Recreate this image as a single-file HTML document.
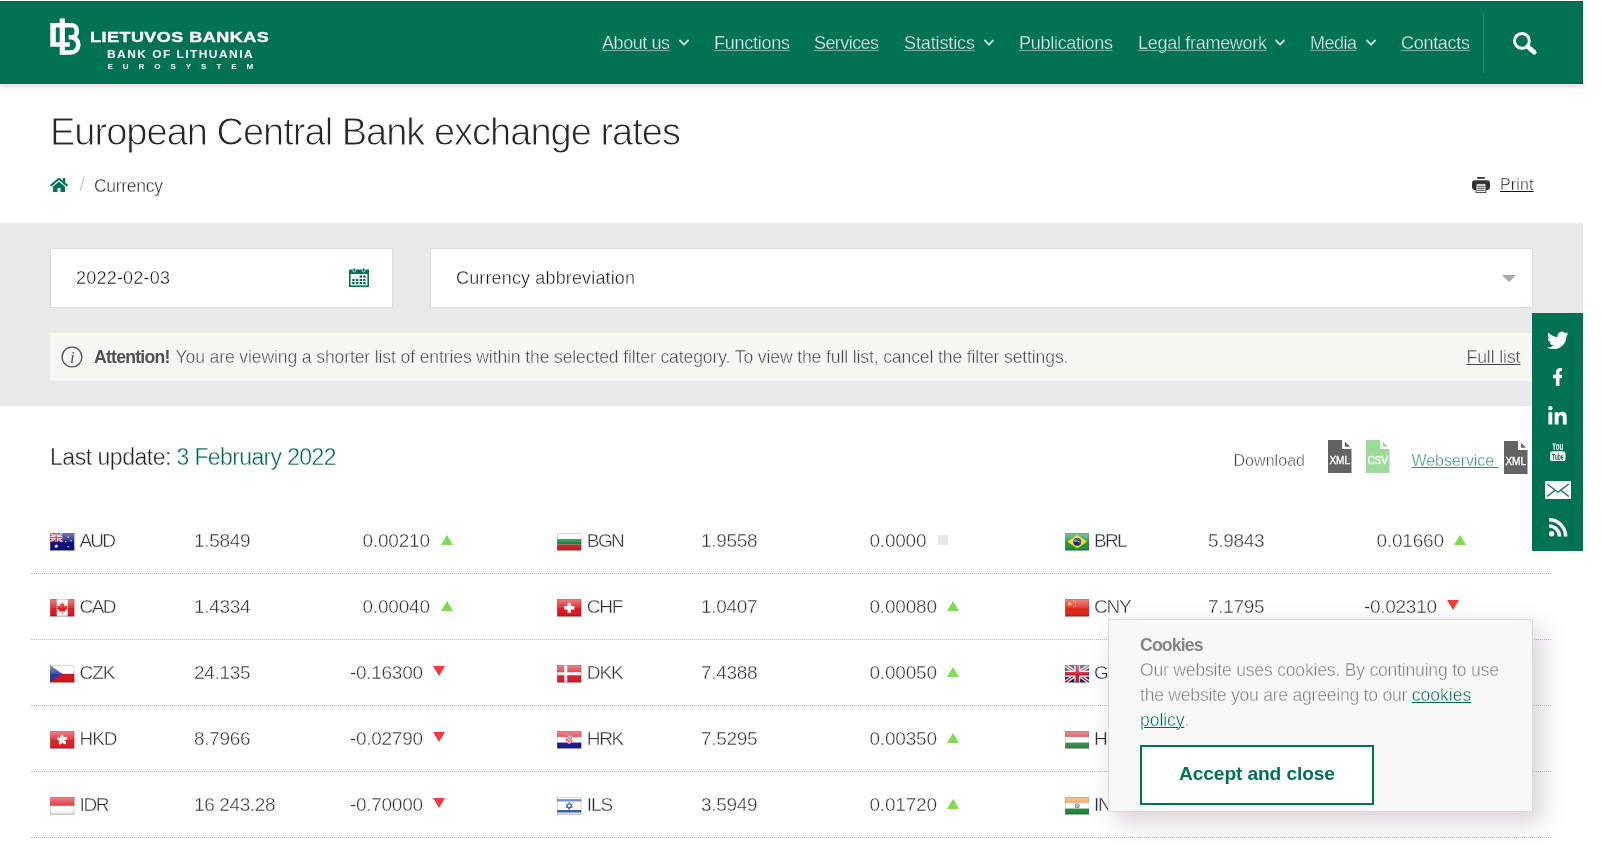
<!DOCTYPE html>
<html lang="en">
<head>
<meta charset="utf-8">
<title>European Central Bank exchange rates | Bank of Lithuania</title>
<style>
*{box-sizing:border-box;margin:0;padding:0}
html,body{width:1603px;height:861px;overflow:hidden;background:#fff}
body{font-family:"Liberation Sans",sans-serif;color:#333;position:relative;font-size:18px}
a{color:inherit}
.abs{position:absolute;white-space:nowrap}
#wrap{will-change:transform;position:absolute;left:0;top:0;width:1603px;height:861px;overflow:hidden;background:#fff}
/* header */
#hdr{position:absolute;left:0;top:1px;width:1583px;height:83px;background:#007254;border-top:1px solid #006648;border-bottom:1px solid #006648;box-shadow:0 1px 0 #f4ebed,1px 0 0 #f4ebed,0 3px 4px rgba(0,0,0,.13)}
#nav a{position:absolute;top:28.5px;height:24px;line-height:24px;font-size:18px;color:#fff;text-decoration:underline;text-decoration-color:rgba(255,255,255,.45);text-decoration-thickness:1px;text-underline-offset:1px;white-space:nowrap}
#nav svg.chev{position:absolute;top:36.500px;width:10px;height:8px}
#nav .div{position:absolute;left:1483px;top:11px;width:1px;height:60px;background:#2a8a70}
/* title */
h1{position:absolute;left:50px;top:108px;height:48px;line-height:48px;font-size:38px;font-weight:normal;color:#262626;white-space:nowrap}
.crumb{font-size:17.600px;color:#262626;top:174.300px;height:24px;line-height:24px}
.crumb.sep{color:#bdbdbd;font-size:21px;-webkit-text-stroke:.5px #fff;top:172.300px}
.home{left:50.300px;top:177px;width:18px;height:16px;line-height:0}
.print{left:1472px;top:176.800px;width:64px;height:18px;color:#161616;line-height:0}
.print .pt{position:absolute;top:-3.200px;height:22px;line-height:22px;font-size:16px;text-decoration:underline;text-decoration-thickness:1px;text-underline-offset:1px}
/* filter band */
#band{position:absolute;left:0;top:223px;width:1583px;height:183px;background:#e9e9e9}
.inp{position:absolute;top:248px;height:59.500px;background:#fff;border:1px solid #dcdcdc}
.inp span{position:absolute;left:25px;top:17px;height:24px;line-height:24px;font-size:18px;color:#141414;white-space:nowrap}
#att{position:absolute;left:50px;top:333px;width:1483px;height:47.500px;background:#f6f6f3;font-size:17.600px;color:#484848}
#att span,#att a,#att b{position:absolute;top:11.800px;height:24px;line-height:24px;white-space:nowrap}
#att a{text-decoration:underline;text-decoration-thickness:1px;text-underline-offset:1px}
#att .info{position:absolute;left:10.800px;top:13px}
/* social */
#soc{position:absolute;left:1532px;top:313px;width:51px;height:238px;background:#007254}
#soc svg{position:absolute}
/* list head */
.lu{left:0;top:443px;width:400px;height:28px;line-height:28px;font-size:23px;color:#262626}
.lu span{position:absolute;top:0}
.lu .g{color:#00694c}
.dl{left:0;top:450.300px;width:1540px;height:22px;line-height:22px;font-size:16px;color:#444}
.dl span,.dl a{position:absolute;top:0}
.dl .file{line-height:0}
.dl .ws{color:#2a8f73;text-decoration:underline;text-decoration-thickness:1px;text-underline-offset:1px;white-space:pre}
/* table */
.row{position:absolute;left:0;width:1583px;height:66px}
.row .ln{position:absolute;left:31px;width:1520px;bottom:0;height:0;border-bottom:1px dotted #bdbdbd}
.row span{position:absolute;top:20.200px;height:26px;line-height:26px;font-size:19px;color:#2e3236;white-space:nowrap}
.row svg.fl{position:absolute;top:25px;width:24.5px;height:18px}
.row i{position:absolute;width:0;height:0;border-left:6px solid transparent;border-right:6px solid transparent}
.row i.up{top:27.300px;border-bottom:10px solid #7fdc4f}
.row i.dn{top:26.800px;border-top:10px solid #f13b3b}
.row i.eq{top:27.600px;width:10px;height:10px;border:0;background:#e8e8e8}
/* cookie */
#ck{position:absolute;left:1108px;top:619px;width:425px;height:193px;background:#f8f8f8;border:1px solid #d9d9d9;box-shadow:8px 10px 24px rgba(70,40,70,.22);color:#7a7a7a;font-size:18px}
#ck>span{position:absolute;left:31px;height:25px;line-height:25px;white-space:pre;font-size:17.600px}
#ck .in{position:relative;display:inline-block;left:0!important;white-space:pre}
#ck a.in{color:#00694c;text-decoration:underline;text-decoration-thickness:1px;text-underline-offset:1px}
#ck .t{position:absolute;top:13.300px;height:24px;line-height:24px;font-size:17.600px;color:#858585;white-space:nowrap}
#ck .btn{position:absolute;left:31px;top:125px;width:234px;height:60px;text-decoration:none;border:2px solid #007254;background:#fff}
#ck .btn b{position:absolute;top:13.800px;height:26px;line-height:26px;font-size:19.200px;color:#007254;white-space:nowrap}

.logo{position:absolute;left:0;top:0;width:280px;height:82px;color:#fff;text-decoration:none}
.logo .mono{position:absolute;left:50px;top:14px}
.logo b{position:absolute;white-space:nowrap;color:#fff;font-weight:bold}
.logo .l1{-webkit-text-stroke:.35px #fff;top:26px;font-size:15.300px;line-height:18px;height:18px}
.logo .l2{top:46.400px;font-size:10.900px;line-height:12px;height:12px}
.logo .l3{top:60.200px;font-size:8px;line-height:10px;height:10px}
#nav svg.srch{position:absolute;left:1511.800px;top:28.800px}

.inp .cal{position:absolute;left:298px;top:18.600px}
.inp .caret{position:absolute;left:1071px;top:26px;width:0;height:0;border-left:7.200px solid transparent;border-right:7.200px solid transparent;border-top:7.500px solid #a9a9a9}
/* thin-out strokes to mimic a light weight */
em.ts{font-style:normal}
.row span,.lu span,.crumb,.dl span,.dl .ws em,.print .pt em{-webkit-text-stroke:.38px #fff}
h1{-webkit-text-stroke:.9px #fff}
#nav a span{-webkit-text-stroke:.4px #007254}
.inp span{-webkit-text-stroke:.38px #fff}
#att span,#att a em{-webkit-text-stroke:.38px #f6f6f3}
#ck span.in,#ck a.in em{-webkit-text-stroke:.4px #f8f8f8}
#att b{color:#525252}

</style>
</head>
<body>
<div id="wrap">
<header id="hdr">
  <a class="logo" href="#" aria-label="Lietuvos bankas">
    <svg class="mono" viewBox="50 16 32 40" width="32" height="40">
      <g fill="#fff">
        <path d="M50.300 23H60v4.400H55.800v14.800H69.800v4.600H50.300z"/>
        <path d="M59.700 18.400h5.200v36.300h-5.200z"/>
      </g>
      <path d="M64 25.200h8.200a4.600 6 0 0 1 0 12H68.700M71 37.200a7.300 7.650 0 0 1 0 15.300H62" fill="none" stroke="#fff" stroke-width="4.600"/>
    </svg>
    <b class="l1" style="left:90px;letter-spacing:0.375px;transform:scaleX(1.18);transform-origin:0 0">LIETUVOS BANKAS</b>
    <b class="l2" style="left:107.4px;letter-spacing:1.315px;transform:scaleX(1.1);transform-origin:0 0">BANK OF LITHUANIA</b>
    <b class="l3" style="left:107.4px;letter-spacing:9.987px">EUROSYSTEM</b>
  </a>
  <nav id="nav">
    <a href="#" style="left:602px"><span style="letter-spacing:-0.438px">About us</span></a>
    <a href="#" style="left:714px"><span style="letter-spacing:-0.256px">Functions</span></a>
    <a href="#" style="left:814px"><span style="letter-spacing:-0.576px">Services</span></a>
    <a href="#" style="left:904px"><span style="letter-spacing:-0.115px">Statistics</span></a>
    <a href="#" style="left:1019px"><span style="letter-spacing:-0.278px">Publications</span></a>
    <a href="#" style="left:1138px"><span style="letter-spacing:-0.290px">Legal framework</span></a>
    <a href="#" style="left:1310px"><span style="letter-spacing:-0.508px">Media</span></a>
    <a href="#" style="left:1401px"><span style="letter-spacing:-0.292px">Contacts</span></a>
    <svg class="chev" style="left:679px" viewBox="0 0 10 8"><path d="M1 1.500l4 4.200 4-4.200" fill="none" stroke="#bfddd3" stroke-width="1.900" stroke-linecap="round" stroke-linejoin="round"/></svg>
    <svg class="chev" style="left:984px" viewBox="0 0 10 8"><path d="M1 1.500l4 4.200 4-4.200" fill="none" stroke="#bfddd3" stroke-width="1.900" stroke-linecap="round" stroke-linejoin="round"/></svg>
    <svg class="chev" style="left:1275px" viewBox="0 0 10 8"><path d="M1 1.500l4 4.200 4-4.200" fill="none" stroke="#bfddd3" stroke-width="1.900" stroke-linecap="round" stroke-linejoin="round"/></svg>
    <svg class="chev" style="left:1366px" viewBox="0 0 10 8"><path d="M1 1.500l4 4.200 4-4.200" fill="none" stroke="#bfddd3" stroke-width="1.900" stroke-linecap="round" stroke-linejoin="round"/></svg>
    <div class="div"></div>
    <svg class="srch" viewBox="0 0 26 26" width="26" height="26" aria-label="Search"><circle cx="9.900" cy="9.900" r="7.400" fill="none" stroke="#fff" stroke-width="3"/><path d="M16.400 16.300l5.800 5" stroke="#fff" stroke-width="4.800" stroke-linecap="round"/></svg>
  </nav>
</header>
<h1><span style="letter-spacing:-0.984px">European Central Bank exchange rates</span></h1>
<nav class="bc">
  <a href="#" class="abs home" aria-label="Home"><svg viewBox="0 0 576 512" width="18" height="16"><path fill="#007254" d="M280.37 148.260L96 300.110V464a16 16 0 0 0 16 16l112.060-.290a16 16 0 0 0 15.920-16V368a16 16 0 0 1 16-16h64a16 16 0 0 1 16 16v95.640a16 16 0 0 0 16 16.050L464 480a16 16 0 0 0 16-16V300L295.670 148.260a12.190 12.190 0 0 0-15.300 0zM571.600 251.470L488 182.560V44.050a12 12 0 0 0-12-12h-56a12 12 0 0 0-12 12v72.610L318.470 43a48 48 0 0 0-61 0L4.340 251.470a12 12 0 0 0-1.600 16.900l25.500 31A12 12 0 0 0 45.150 301l235.220-193.740a12.190 12.190 0 0 1 15.300 0L530.900 301a12 12 0 0 0 16.900-1.600l25.500-31a12 12 0 0 0-1.700-16.930z"/></svg></a>
  <span class="abs crumb sep" style="left:79.300px">/</span>
  <div class="abs crumb" style="left:94px"><span style="letter-spacing:-0.339px">Currency</span></div>
</nav>
<a href="#" class="abs print"><svg viewBox="0 0 18 16" width="18" height="16"><rect x="5.200" y="0" width="7.600" height="1.800" fill="#333"/><rect x="0" y="3.200" width="18" height="9.800" rx="3" fill="#333"/><rect x="4.100" y="6.800" width="9.800" height="8.800" fill="#fff" stroke="#333" stroke-width=".9"/><path d="M5.300 9.300h7.400M5.300 11.300h7.400M5.300 13.300h7.400" stroke="#333" stroke-width=".9"/></svg><span class="pt" style="left:28px"><em class="ts" style="letter-spacing:0.148px">Print</em></span></a>
<div id="band"></div>
<div class="inp" style="left:50px;width:343px"><span style="letter-spacing:0.214px">2022-02-03</span><svg class="cal" viewBox="0 0 20 19" width="20" height="19"><path fill="#007254" d="M0 1.500h20V19H0z"/><rect x="1.600" y="6" width="16.800" height="11.400" fill="#fff"/><g fill="#007254"><rect x="4" y="0" width="2.600" height="4" rx="1.200" stroke="#e8f3ef" stroke-width=".8"/><rect x="13.400" y="0" width="2.600" height="4" rx="1.200" stroke="#e8f3ef" stroke-width=".8"/><path d="M10.600 7.600h2.400v2.200h-2.400zM14.200 7.600h2.400v2.200h-2.400zM3.200 10.900h2.400v2.200H3.200zM6.900 10.900h2.400v2.200H6.900zM10.600 10.900h2.400v2.200h-2.400zM14.200 10.900h2.400v2.200h-2.400zM3.200 14.100h2.400v2.200H3.200zM6.900 14.100h2.400v2.200H6.900zM10.600 14.100h2.400v2.200h-2.400zM14.200 14.100h2.400v2.200h-2.400z"/></g></svg></div>
<div class="inp" style="left:430px;width:1103px"><span style="letter-spacing:0.145px">Currency abbreviation</span><i class="caret"></i></div>
<div id="att">
  <svg class="info" viewBox="0 0 22 22" width="22" height="22"><circle cx="11" cy="11" r="9.900" fill="none" stroke="#555" stroke-width="1.400"/><text x="11.300" y="16.600" text-anchor="middle" font-family="Liberation Serif, serif" font-style="italic" font-size="17" fill="#555">i</text></svg>
  <b style="left:44px;letter-spacing:-0.751px">Attention!</b>
  <span style="left:125.5px;letter-spacing:-0.134px">You are viewing a shorter list of entries within the selected filter category. To view the full list, cancel the filter settings.</span>
  <a href="#" style="left:1416.500px"><em class="ts" style="letter-spacing:-0.094px">Full list</em></a>
</div>
<div class="abs lu"><span style="left:50px;letter-spacing:-0.464px">Last update:</span><span class="g" style="left:176.5px;letter-spacing:-0.627px">3 February 2022</span></div>
<div class="abs dl"><span style="left:1233.5px;letter-spacing:0.049px">Download</span>
  <a href="#" class="file" style="left:1327.500px;top:-10.300px"><svg viewBox="0 0 24 33" width="24" height="33"><path fill="#636363" d="M0 0h14.100v9H23.500V33H0z"/><path fill="#636363" d="M16.900 1.700v5.100h5.300z"/><text x="11.700" y="23.700" text-anchor="middle" font-family="Liberation Sans, sans-serif" font-size="10.900" textLength="20.600" lengthAdjust="spacingAndGlyphs" fill="#fff" stroke="#fff" stroke-width=".35">XML</text></svg></a>
  <a href="#" class="file" style="left:1366.400px;top:-10.300px"><svg viewBox="0 0 24 33" width="24" height="33"><path fill="#9ddb99" d="M0 0h14.100v9H23.500V33H0z"/><path fill="#9ddb99" d="M16.900 1.700v5.100h5.300z"/><text x="11.700" y="23.700" text-anchor="middle" font-family="Liberation Sans, sans-serif" font-size="10.900" textLength="20.600" lengthAdjust="spacingAndGlyphs" fill="#fff" stroke="#fff" stroke-width=".35">CSV</text></svg></a>
  <a href="#" class="ws" style="left:1411.500px"><em class="ts" style="letter-spacing:-0.073px">Webservice </em></a>
  <a href="#" class="file" style="left:1504px;top:-9.300px"><svg viewBox="0 0 24 33" width="24" height="33"><path fill="#636363" d="M0 0h14.100v9H23.500V33H0z"/><path fill="#636363" d="M16.900 1.700v5.100h5.300z"/><text x="11.700" y="23.700" text-anchor="middle" font-family="Liberation Sans, sans-serif" font-size="10.900" textLength="20.600" lengthAdjust="spacingAndGlyphs" fill="#fff" stroke="#fff" stroke-width=".35">XML</text></svg></a>
</div>
<section id="rates">
<div class="row" style="top:507.5px">
  <svg class="fl" style="left:50px" viewBox="-0.25 -0.25 24.5 18" aria-label="AU flag"><linearGradient id="g00" x1="0" y1="0" x2="0" y2="1"><stop offset="0" stop-color="#fff" stop-opacity=".45"/><stop offset=".5" stop-color="#fff" stop-opacity=".12"/><stop offset=".52" stop-color="#fff" stop-opacity="0"/><stop offset="1" stop-color="#000" stop-opacity=".1"/></linearGradient><rect x="-0.25" y="16.9" width="24.5" height=".9" fill="#000" opacity=".22"/><g><rect width="24" height="17" fill="#0c0c7a"/><rect width="12" height="8.5" fill="#012169"/><path d="M0 0L12 8.5M12 0L0 8.5" stroke="#fff" stroke-width="1.87"/><path d="M0 0L12 8.5M12 0L0 8.5" stroke="#c8102e" stroke-width="0.68"/><path d="M6 0V8.5M0 4.25H12" stroke="#fff" stroke-width="2.89"/><path d="M6 0V8.5M0 4.25H12" stroke="#c8102e" stroke-width="1.7"/><polygon points="6.00,10.80 6.48,12.01 7.72,11.63 7.07,12.76 8.14,13.49 6.86,13.69 6.95,14.98 6.00,14.10 5.05,14.98 5.14,13.69 3.86,13.49 4.93,12.76 4.28,11.63 5.52,12.01" fill="#fff"/><polygon points="18.00,2.90 18.24,3.50 18.86,3.31 18.54,3.88 19.07,4.24 18.43,4.34 18.48,4.99 18.00,4.55 17.52,4.99 17.57,4.34 16.93,4.24 17.46,3.88 17.14,3.31 17.76,3.50" fill="#fff"/><polygon points="21.00,6.50 21.22,7.05 21.78,6.88 21.49,7.39 21.97,7.72 21.39,7.81 21.43,8.40 21.00,8.00 20.57,8.40 20.61,7.81 20.03,7.72 20.51,7.39 20.22,6.88 20.78,7.05" fill="#fff"/><polygon points="18.00,12.40 18.24,13.00 18.86,12.81 18.54,13.38 19.07,13.74 18.43,13.84 18.48,14.49 18.00,14.05 17.52,14.49 17.57,13.84 16.93,13.74 17.46,13.38 17.14,12.81 17.76,13.00" fill="#fff"/><polygon points="15.50,7.50 15.72,8.05 16.28,7.88 15.99,8.39 16.47,8.72 15.89,8.81 15.93,9.40 15.50,9.00 15.07,9.40 15.11,8.81 14.53,8.72 15.01,8.39 14.72,7.88 15.28,8.05" fill="#fff"/></g><rect width="24" height="17" fill="url(#g00)"/><rect x=".25" y=".25" width="23.5" height="16.5" fill="none" stroke="#000" stroke-opacity=".3" stroke-width=".5"/></svg>
  <span style="left:79.5px;letter-spacing:-1.812px">AUD</span>
  <span style="left:194px;letter-spacing:-0.325px">1.5849</span>
  <span style="left:362.5px;letter-spacing:-0.198px">0.00210</span>
  <i class="up" style="left:441px"></i>
  <svg class="fl" style="left:557.3px" viewBox="-0.25 -0.25 24.5 18" aria-label="BG flag"><linearGradient id="g01" x1="0" y1="0" x2="0" y2="1"><stop offset="0" stop-color="#fff" stop-opacity=".45"/><stop offset=".5" stop-color="#fff" stop-opacity=".12"/><stop offset=".52" stop-color="#fff" stop-opacity="0"/><stop offset="1" stop-color="#000" stop-opacity=".1"/></linearGradient><rect x="-0.25" y="16.9" width="24.5" height=".9" fill="#000" opacity=".22"/><g><rect width="24" height="17" fill="#fff"/><rect y="5.67" width="24" height="5.67" fill="#1f8548"/><rect y="11.33" width="24" height="5.67" fill="#d01f28"/></g><rect width="24" height="17" fill="url(#g01)"/><rect x=".25" y=".25" width="23.5" height="16.5" fill="none" stroke="#000" stroke-opacity=".3" stroke-width=".5"/></svg>
  <span style="left:586.8px;letter-spacing:-1.594px">BGN</span>
  <span style="left:701px;letter-spacing:-0.325px">1.9558</span>
  <span style="left:869.5px;letter-spacing:-0.225px">0.0000</span>
  <i class="eq" style="left:938px"></i>
  <svg class="fl" style="left:1064.6px" viewBox="-0.25 -0.25 24.5 18" aria-label="BR flag"><linearGradient id="g02" x1="0" y1="0" x2="0" y2="1"><stop offset="0" stop-color="#fff" stop-opacity=".45"/><stop offset=".5" stop-color="#fff" stop-opacity=".12"/><stop offset=".52" stop-color="#fff" stop-opacity="0"/><stop offset="1" stop-color="#000" stop-opacity=".1"/></linearGradient><rect x="-0.25" y="16.9" width="24.5" height=".9" fill="#000" opacity=".22"/><g><rect width="24" height="17" fill="#1f9248"/><polygon points="12,1.800 21.800,8.500 12,15.200 2.200,8.500" fill="#fedf00"/><circle cx="12" cy="8.5" r="4" fill="#15259a"/><path d="M8.6 7.6Q12 6.8 15.4 9.4" stroke="#fff" stroke-width=".7" fill="none"/></g><rect width="24" height="17" fill="url(#g02)"/><rect x=".25" y=".25" width="23.5" height="16.5" fill="none" stroke="#000" stroke-opacity=".3" stroke-width=".5"/></svg>
  <span style="left:1094.1px;letter-spacing:-1.734px">BRL</span>
  <span style="left:1208px;letter-spacing:-0.325px">5.9843</span>
  <span style="left:1376.5px;letter-spacing:-0.198px">0.01660</span>
  <i class="up" style="left:1454.1px"></i>
  <div class="ln"></div>
</div>
<div class="row" style="top:573.5px">
  <svg class="fl" style="left:50px" viewBox="-0.25 -0.25 24.5 18" aria-label="CA flag"><linearGradient id="g10" x1="0" y1="0" x2="0" y2="1"><stop offset="0" stop-color="#fff" stop-opacity=".45"/><stop offset=".5" stop-color="#fff" stop-opacity=".12"/><stop offset=".52" stop-color="#fff" stop-opacity="0"/><stop offset="1" stop-color="#000" stop-opacity=".1"/></linearGradient><rect x="-0.25" y="16.9" width="24.5" height=".9" fill="#000" opacity=".22"/><g><rect width="24" height="17" fill="#fff"/><rect width="6.500" height="17" fill="#e0161f"/><rect x="17.500" width="6.500" height="17" fill="#e0161f"/><path d="M12 2.6l1.1 2.2 1.2-.5-.5 3 1.5-1.4.4.9 1.7-.3-.7 2 .8.5-2.9 2.3.4 1.2-2.7-.4V15h-.6v-2.9l-2.7.4.4-1.2L6.5 9l.8-.5-.7-2 1.7.3.4-.9 1.5 1.4-.5-3 1.2.5z" fill="#e0161f"/></g><rect width="24" height="17" fill="url(#g10)"/><rect x=".25" y=".25" width="23.5" height="16.5" fill="none" stroke="#000" stroke-opacity=".3" stroke-width=".5"/></svg>
  <span style="left:79.5px;letter-spacing:-1.562px">CAD</span>
  <span style="left:194px;letter-spacing:-0.325px">1.4334</span>
  <span style="left:362.5px;letter-spacing:-0.198px">0.00040</span>
  <i class="up" style="left:441px"></i>
  <svg class="fl" style="left:557.3px" viewBox="-0.25 -0.25 24.5 18" aria-label="CH flag"><linearGradient id="g11" x1="0" y1="0" x2="0" y2="1"><stop offset="0" stop-color="#fff" stop-opacity=".45"/><stop offset=".5" stop-color="#fff" stop-opacity=".12"/><stop offset=".52" stop-color="#fff" stop-opacity="0"/><stop offset="1" stop-color="#000" stop-opacity=".1"/></linearGradient><rect x="-0.25" y="16.9" width="24.5" height=".9" fill="#000" opacity=".22"/><g><rect width="24" height="17" fill="#e3131b"/><path d="M10.300 3.400h3.400v3.400h3.400v3.400h-3.400v3.400h-3.400v-3.400H6.900V6.800h3.400z" fill="#fff"/></g><rect width="24" height="17" fill="url(#g11)"/><rect x=".25" y=".25" width="23.5" height="16.5" fill="none" stroke="#000" stroke-opacity=".3" stroke-width=".5"/></svg>
  <span style="left:586.8px;letter-spacing:-1.281px">CHF</span>
  <span style="left:701px;letter-spacing:-0.325px">1.0407</span>
  <span style="left:869.5px;letter-spacing:-0.198px">0.00080</span>
  <i class="up" style="left:947.1px"></i>
  <svg class="fl" style="left:1064.6px" viewBox="-0.25 -0.25 24.5 18" aria-label="CN flag"><linearGradient id="g12" x1="0" y1="0" x2="0" y2="1"><stop offset="0" stop-color="#fff" stop-opacity=".45"/><stop offset=".5" stop-color="#fff" stop-opacity=".12"/><stop offset=".52" stop-color="#fff" stop-opacity="0"/><stop offset="1" stop-color="#000" stop-opacity=".1"/></linearGradient><rect x="-0.25" y="16.9" width="24.5" height=".9" fill="#000" opacity=".22"/><g><rect width="24" height="17" fill="#e1251b"/><polygon points="4.50,2.10 5.06,3.72 6.78,3.76 5.41,4.80 5.91,6.44 4.50,5.46 3.09,6.44 3.59,4.80 2.22,3.76 3.94,3.72" fill="#ffde00"/><polygon points="8.60,1.00 8.79,1.54 9.36,1.55 8.90,1.90 9.07,2.45 8.60,2.12 8.13,2.45 8.30,1.90 7.84,1.55 8.41,1.54" fill="#ffde00"/><polygon points="10.20,2.80 10.39,3.34 10.96,3.35 10.50,3.70 10.67,4.25 10.20,3.92 9.73,4.25 9.90,3.70 9.44,3.35 10.01,3.34" fill="#ffde00"/><polygon points="10.20,5.20 10.39,5.74 10.96,5.75 10.50,6.10 10.67,6.65 10.20,6.32 9.73,6.65 9.90,6.10 9.44,5.75 10.01,5.74" fill="#ffde00"/><polygon points="8.60,7.00 8.79,7.54 9.36,7.55 8.90,7.90 9.07,8.45 8.60,8.12 8.13,8.45 8.30,7.90 7.84,7.55 8.41,7.54" fill="#ffde00"/></g><rect width="24" height="17" fill="url(#g12)"/><rect x=".25" y=".25" width="23.5" height="16.5" fill="none" stroke="#000" stroke-opacity=".3" stroke-width=".5"/></svg>
  <span style="left:1094.1px;letter-spacing:-1.312px">CNY</span>
  <span style="left:1208px;letter-spacing:-0.325px">7.1795</span>
  <span style="left:1364px;letter-spacing:-0.288px">-0.02310</span>
  <i class="dn" style="left:1447.1px"></i>
  <div class="ln"></div>
</div>
<div class="row" style="top:639.5px">
  <svg class="fl" style="left:50px" viewBox="-0.25 -0.25 24.5 18" aria-label="CZ flag"><linearGradient id="g20" x1="0" y1="0" x2="0" y2="1"><stop offset="0" stop-color="#fff" stop-opacity=".45"/><stop offset=".5" stop-color="#fff" stop-opacity=".12"/><stop offset=".52" stop-color="#fff" stop-opacity="0"/><stop offset="1" stop-color="#000" stop-opacity=".1"/></linearGradient><rect x="-0.25" y="16.9" width="24.5" height=".9" fill="#000" opacity=".22"/><g><rect width="24" height="17" fill="#fff"/><rect y="8.5" width="24" height="8.5" fill="#d7141a"/><polygon points="0,0 12,8.500 0,17" fill="#223c9a"/></g><rect width="24" height="17" fill="url(#g20)"/><rect x=".25" y=".25" width="23.5" height="16.5" fill="none" stroke="#000" stroke-opacity=".3" stroke-width=".5"/></svg>
  <span style="left:79.5px;letter-spacing:-1.000px">CZK</span>
  <span style="left:194px;letter-spacing:-0.325px">24.135</span>
  <span style="left:350px;letter-spacing:-0.288px">-0.16300</span>
  <i class="dn" style="left:433px"></i>
  <svg class="fl" style="left:557.3px" viewBox="-0.25 -0.25 24.5 18" aria-label="DK flag"><linearGradient id="g21" x1="0" y1="0" x2="0" y2="1"><stop offset="0" stop-color="#fff" stop-opacity=".45"/><stop offset=".5" stop-color="#fff" stop-opacity=".12"/><stop offset=".52" stop-color="#fff" stop-opacity="0"/><stop offset="1" stop-color="#000" stop-opacity=".1"/></linearGradient><rect x="-0.25" y="16.9" width="24.5" height=".9" fill="#000" opacity=".22"/><g><rect width="24" height="17" fill="#d8202f"/><path d="M8.5 0V17M0 8.5H24" stroke="#fff" stroke-width="3"/></g><rect width="24" height="17" fill="url(#g21)"/><rect x=".25" y=".25" width="23.5" height="16.5" fill="none" stroke="#000" stroke-opacity=".3" stroke-width=".5"/></svg>
  <span style="left:586.8px;letter-spacing:-1.039px">DKK</span>
  <span style="left:701px;letter-spacing:-0.325px">7.4388</span>
  <span style="left:869.5px;letter-spacing:-0.198px">0.00050</span>
  <i class="up" style="left:947.1px"></i>
  <svg class="fl" style="left:1064.6px" viewBox="-0.25 -0.25 24.5 18" aria-label="GB flag"><linearGradient id="g22" x1="0" y1="0" x2="0" y2="1"><stop offset="0" stop-color="#fff" stop-opacity=".45"/><stop offset=".5" stop-color="#fff" stop-opacity=".12"/><stop offset=".52" stop-color="#fff" stop-opacity="0"/><stop offset="1" stop-color="#000" stop-opacity=".1"/></linearGradient><rect x="-0.25" y="16.9" width="24.5" height=".9" fill="#000" opacity=".22"/><g><rect width="24" height="17" fill="#012169"/><path d="M0 0L24 17M24 0L0 17" stroke="#fff" stroke-width="3.74"/><path d="M0 0L24 17M24 0L0 17" stroke="#c8102e" stroke-width="1.36"/><path d="M12 0V17M0 8.5H24" stroke="#fff" stroke-width="5.78"/><path d="M12 0V17M0 8.5H24" stroke="#c8102e" stroke-width="3.4"/></g><rect width="24" height="17" fill="url(#g22)"/><rect x=".25" y=".25" width="23.5" height="16.5" fill="none" stroke="#000" stroke-opacity=".3" stroke-width=".5"/></svg>
  <span style="left:1094.1px;letter-spacing:-2.312px">GBP</span>
  <span style="left:1208px;letter-spacing:-0.198px">0.83718</span>
  <span style="left:1376.5px;letter-spacing:-0.198px">0.00400</span>
  <i class="up" style="left:1454.1px"></i>
  <div class="ln"></div>
</div>
<div class="row" style="top:705.5px">
  <svg class="fl" style="left:50px" viewBox="-0.25 -0.25 24.5 18" aria-label="HK flag"><linearGradient id="g30" x1="0" y1="0" x2="0" y2="1"><stop offset="0" stop-color="#fff" stop-opacity=".45"/><stop offset=".5" stop-color="#fff" stop-opacity=".12"/><stop offset=".52" stop-color="#fff" stop-opacity="0"/><stop offset="1" stop-color="#000" stop-opacity=".1"/></linearGradient><rect x="-0.25" y="16.9" width="24.5" height=".9" fill="#000" opacity=".22"/><g><rect width="24" height="17" fill="#de1f26"/><g fill="#fff" transform="translate(12 8.5)"><path d="M0 0C-2.6-1.2-2.6-4.6 0-5.6C1.9-4.4 1.6-1.6 0 0z" transform="rotate(0)"/><path d="M0 0C-2.6-1.2-2.6-4.6 0-5.6C1.9-4.4 1.6-1.6 0 0z" transform="rotate(72)"/><path d="M0 0C-2.6-1.2-2.6-4.6 0-5.6C1.9-4.4 1.6-1.6 0 0z" transform="rotate(144)"/><path d="M0 0C-2.6-1.2-2.6-4.6 0-5.6C1.9-4.4 1.6-1.6 0 0z" transform="rotate(216)"/><path d="M0 0C-2.6-1.2-2.6-4.6 0-5.6C1.9-4.4 1.6-1.6 0 0z" transform="rotate(288)"/></g></g><rect width="24" height="17" fill="url(#g30)"/><rect x=".25" y=".25" width="23.5" height="16.5" fill="none" stroke="#000" stroke-opacity=".3" stroke-width=".5"/></svg>
  <span style="left:79.5px;letter-spacing:-1.062px">HKD</span>
  <span style="left:194px;letter-spacing:-0.325px">8.7966</span>
  <span style="left:350px;letter-spacing:-0.288px">-0.02790</span>
  <i class="dn" style="left:433px"></i>
  <svg class="fl" style="left:557.3px" viewBox="-0.25 -0.25 24.5 18" aria-label="HR flag"><linearGradient id="g31" x1="0" y1="0" x2="0" y2="1"><stop offset="0" stop-color="#fff" stop-opacity=".45"/><stop offset=".5" stop-color="#fff" stop-opacity=".12"/><stop offset=".52" stop-color="#fff" stop-opacity="0"/><stop offset="1" stop-color="#000" stop-opacity=".1"/></linearGradient><rect x="-0.25" y="16.9" width="24.5" height=".9" fill="#000" opacity=".22"/><g><rect width="24" height="17" fill="#fff"/><rect width="24" height="5.67" fill="#e8232d"/><rect y="11.33" width="24" height="5.67" fill="#171796"/><path d="M9.3 4.2h5.4v5.6c0 1.6-1.3 2.8-2.7 2.8s-2.7-1.2-2.7-2.8z" fill="#fff" stroke="#e8232d" stroke-width=".5"/><path d="M9.3 4.2h1.35v1.7H9.3zM12 4.2h1.35v1.7H12zM10.65 5.9H12v1.7h-1.35zM13.35 5.9h1.35v1.7h-1.35zM9.3 7.6h1.35v1.7H9.3zM12 7.6h1.35v1.7H12zM10.65 9.3H12V11h-1.35zM13.35 9.3h1.2V11h-1.2z" fill="#e8232d"/><path d="M9.2 4.2l.5-1.6 1 .8 1.3-1.1 1.3 1.1 1-.8.5 1.6z" fill="#4b6fb8"/></g><rect width="24" height="17" fill="url(#g31)"/><rect x=".25" y=".25" width="23.5" height="16.5" fill="none" stroke="#000" stroke-opacity=".3" stroke-width=".5"/></svg>
  <span style="left:586.8px;letter-spacing:-1.312px">HRK</span>
  <span style="left:701px;letter-spacing:-0.325px">7.5295</span>
  <span style="left:869.5px;letter-spacing:-0.198px">0.00350</span>
  <i class="up" style="left:947.1px"></i>
  <svg class="fl" style="left:1064.6px" viewBox="-0.25 -0.25 24.5 18" aria-label="HU flag"><linearGradient id="g32" x1="0" y1="0" x2="0" y2="1"><stop offset="0" stop-color="#fff" stop-opacity=".45"/><stop offset=".5" stop-color="#fff" stop-opacity=".12"/><stop offset=".52" stop-color="#fff" stop-opacity="0"/><stop offset="1" stop-color="#000" stop-opacity=".1"/></linearGradient><rect x="-0.25" y="16.9" width="24.5" height=".9" fill="#000" opacity=".22"/><g><rect width="24" height="17" fill="#fff"/><rect width="24" height="5.67" fill="#d43a45"/><rect y="11.33" width="24" height="5.67" fill="#3f8a4d"/></g><rect width="24" height="17" fill="url(#g32)"/><rect x=".25" y=".25" width="23.5" height="16.5" fill="none" stroke="#000" stroke-opacity=".3" stroke-width=".5"/></svg>
  <span style="left:1094.1px;letter-spacing:-0.031px">HUF</span>
  <span style="left:1208px;letter-spacing:-0.325px">354.93</span>
  <span style="left:1364px;letter-spacing:-0.288px">-0.78000</span>
  <i class="dn" style="left:1447.1px"></i>
  <div class="ln"></div>
</div>
<div class="row" style="top:771.5px">
  <svg class="fl" style="left:50px" viewBox="-0.25 -0.25 24.5 18" aria-label="ID flag"><linearGradient id="g40" x1="0" y1="0" x2="0" y2="1"><stop offset="0" stop-color="#fff" stop-opacity=".45"/><stop offset=".5" stop-color="#fff" stop-opacity=".12"/><stop offset=".52" stop-color="#fff" stop-opacity="0"/><stop offset="1" stop-color="#000" stop-opacity=".1"/></linearGradient><rect x="-0.25" y="16.9" width="24.5" height=".9" fill="#000" opacity=".22"/><g><rect width="24" height="17" fill="#fff"/><rect width="24" height="8.5" fill="#e0202b"/></g><rect width="24" height="17" fill="url(#g40)"/><rect x=".25" y=".25" width="23.5" height="16.5" fill="none" stroke="#000" stroke-opacity=".3" stroke-width=".5"/></svg>
  <span style="left:79.5px;letter-spacing:-1.367px">IDR</span>
  <span style="left:194px;letter-spacing:-0.379px">16 243.28</span>
  <span style="left:350px;letter-spacing:-0.288px">-0.70000</span>
  <i class="dn" style="left:433px"></i>
  <svg class="fl" style="left:557.3px" viewBox="-0.25 -0.25 24.5 18" aria-label="IL flag"><linearGradient id="g41" x1="0" y1="0" x2="0" y2="1"><stop offset="0" stop-color="#fff" stop-opacity=".45"/><stop offset=".5" stop-color="#fff" stop-opacity=".12"/><stop offset=".52" stop-color="#fff" stop-opacity="0"/><stop offset="1" stop-color="#000" stop-opacity=".1"/></linearGradient><rect x="-0.25" y="16.9" width="24.5" height=".9" fill="#000" opacity=".22"/><g><rect width="24" height="17" fill="#fff"/><rect y="1.8" width="24" height="2.4" fill="#2d5fb4"/><rect y="12.8" width="24" height="2.4" fill="#2d5fb4"/><polygon points="12,4.700 15,10.100 9,10.100" fill="none" stroke="#2d5fb4" stroke-width="1"/><polygon points="12,12.300 15,6.900 9,6.900" fill="none" stroke="#2d5fb4" stroke-width="1"/></g><rect width="24" height="17" fill="url(#g41)"/><rect x=".25" y=".25" width="23.5" height="16.5" fill="none" stroke="#000" stroke-opacity=".3" stroke-width=".5"/></svg>
  <span style="left:586.8px;letter-spacing:-1.016px">ILS</span>
  <span style="left:701px;letter-spacing:-0.325px">3.5949</span>
  <span style="left:869.5px;letter-spacing:-0.198px">0.01720</span>
  <i class="up" style="left:947.1px"></i>
  <svg class="fl" style="left:1064.6px" viewBox="-0.25 -0.25 24.5 18" aria-label="IN flag"><linearGradient id="g42" x1="0" y1="0" x2="0" y2="1"><stop offset="0" stop-color="#fff" stop-opacity=".45"/><stop offset=".5" stop-color="#fff" stop-opacity=".12"/><stop offset=".52" stop-color="#fff" stop-opacity="0"/><stop offset="1" stop-color="#000" stop-opacity=".1"/></linearGradient><rect x="-0.25" y="16.9" width="24.5" height=".9" fill="#000" opacity=".22"/><g><rect width="24" height="17" fill="#fff"/><rect width="24" height="5.67" fill="#f4953a"/><rect y="11.33" width="24" height="5.67" fill="#23883a"/><circle cx="12" cy="8.5" r="2.1" fill="#c7d0ee" stroke="#29358f" stroke-width=".6"/><circle cx="12" cy="8.5" r=".6" fill="#29358f"/></g><rect width="24" height="17" fill="url(#g42)"/><rect x=".25" y=".25" width="23.5" height="16.5" fill="none" stroke="#000" stroke-opacity=".3" stroke-width=".5"/></svg>
  <span style="left:1094.1px;letter-spacing:-1.367px">INR</span>
  <span style="left:1208px;letter-spacing:-0.198px">84.4065</span>
  <span style="left:1376.5px;letter-spacing:-0.198px">0.01350</span>
  <i class="up" style="left:1454.1px"></i>
  <div class="ln"></div>
</div>

</section>
<aside id="soc">
  <a href="#" aria-label="Twitter"><svg style="left:15px;top:17.600px" viewBox="0 1.500 16 13.500" width="21.600" height="18.200"><path fill="#fff" d="M5.026 15c6.038 0 9.341-5.003 9.341-9.334 0-.14 0-.282-.006-.422A6.685 6.685 0 0 0 16 3.542a6.658 6.658 0 0 1-1.889.518 3.301 3.301 0 0 0 1.447-1.817 6.533 6.533 0 0 1-2.087.793A3.286 3.286 0 0 0 7.875 6.030a9.325 9.325 0 0 1-6.767-3.429 3.289 3.289 0 0 0 1.018 4.382A3.323 3.323 0 0 1 .640 6.575v.045a3.288 3.288 0 0 0 2.632 3.218 3.203 3.203 0 0 1-.865.115 3.230 3.230 0 0 1-.614-.057 3.283 3.283 0 0 0 3.067 2.277A6.588 6.588 0 0 1 .780 13.580a6.320 6.320 0 0 1-.780-.045A9.344 9.344 0 0 0 5.026 15z"/></svg></a>
  <a href="#" aria-label="Facebook"><svg style="left:20.600px;top:54.800px" viewBox="22 0 276 512" width="9.800" height="18"><path fill="#fff" d="M279.140 288l14.220-92.660h-88.910v-60.130c0-25.350 12.420-50.060 52.240-50.060h40.420V6.260S260.430 0 225.360 0c-73.220 0-121.080 44.380-121.080 124.720v70.620H22.890V288h81.390v224h100.170V288z"/></svg></a>
  <a href="#" aria-label="LinkedIn"><svg style="left:14.900px;top:93px" viewBox="0 0 448 448" width="20.800" height="18.600"><path fill="#fff" d="M100.280 448H7.400V148.900h92.880zM53.790 108.100C24.090 108.100 0 83.500 0 53.800a53.790 53.790 0 0 1 107.580 0c0 29.700-24.100 54.300-53.790 54.300zM447.900 448h-92.680V302.400c0-34.700-.7-79.200-48.290-79.200-48.290 0-55.690 37.700-55.690 76.700V448h-92.780V148.900h89.080v40.800h1.300c12.400-23.500 42.690-48.300 87.880-48.300 94 0 111.280 61.900 111.280 142.300V448z"/></svg></a>
  <a href="#" aria-label="YouTube"><svg style="left:18px;top:129.600px" viewBox="0 0 15.500 18.500" width="15.500" height="18.500"><text x="7.750" y="7.400" text-anchor="middle" font-family="Liberation Sans, sans-serif" font-weight="bold" font-size="11" textLength="11.500" lengthAdjust="spacingAndGlyphs" fill="#fff">You</text><rect x="0" y="8.200" width="15.500" height="10.300" rx="3" fill="#fff"/><text x="7.750" y="16.700" text-anchor="middle" font-family="Liberation Sans, sans-serif" font-weight="bold" font-size="9.500" textLength="11.500" lengthAdjust="spacingAndGlyphs" fill="#007254">Tube</text></svg></a>
  <a href="#" aria-label="Subscribe"><svg style="left:13.200px;top:168px" viewBox="0 0 26 18" width="26" height="18"><rect width="26" height="18" rx="1.300" fill="#fff"/><path d="M2.200 3L13 11.200 23.800 3M2.200 15.600l8.200-6.700M23.800 15.600l-8.200-6.700" fill="none" stroke="#007254" stroke-width="1.300"/></svg></a>
  <a href="#" aria-label="RSS"><svg style="left:17.300px;top:205.300px" viewBox="0 0 18 18" width="18.400" height="18.400"><circle cx="2.600" cy="15.400" r="2.600" fill="#fff"/><path d="M0 7.700A10.300 10.300 0 0 1 10.300 18M0 1.700A16.300 16.300 0 0 1 16.300 18" fill="none" stroke="#fff" stroke-width="3.400"/></svg></a>
</aside>
<div id="ck">
  <b class="t" style="left:31px;letter-spacing:-0.826px">Cookies</b>
  <span style="top:37.800px"><span class="in" style="left:0px;letter-spacing:-0.215px">Our website uses cookies. By continuing to use</span></span>
  <span style="top:62.800px"><span class="in" style="left:0px;letter-spacing:-0.249px">the website you are agreeing to our </span><a href="#" class="in"><em class="ts" style="letter-spacing:-0.026px">cookies</em></a></span>
  <span style="top:87.800px"><a href="#" class="in"><em class="ts" style="letter-spacing:-0.097px">policy</em></a><span class="in">.</span></span>
  <a href="#" class="btn"><b style="left:37px;letter-spacing:-0.122px">Accept and close</b></a>
</div>
</div>

</body>
</html>
